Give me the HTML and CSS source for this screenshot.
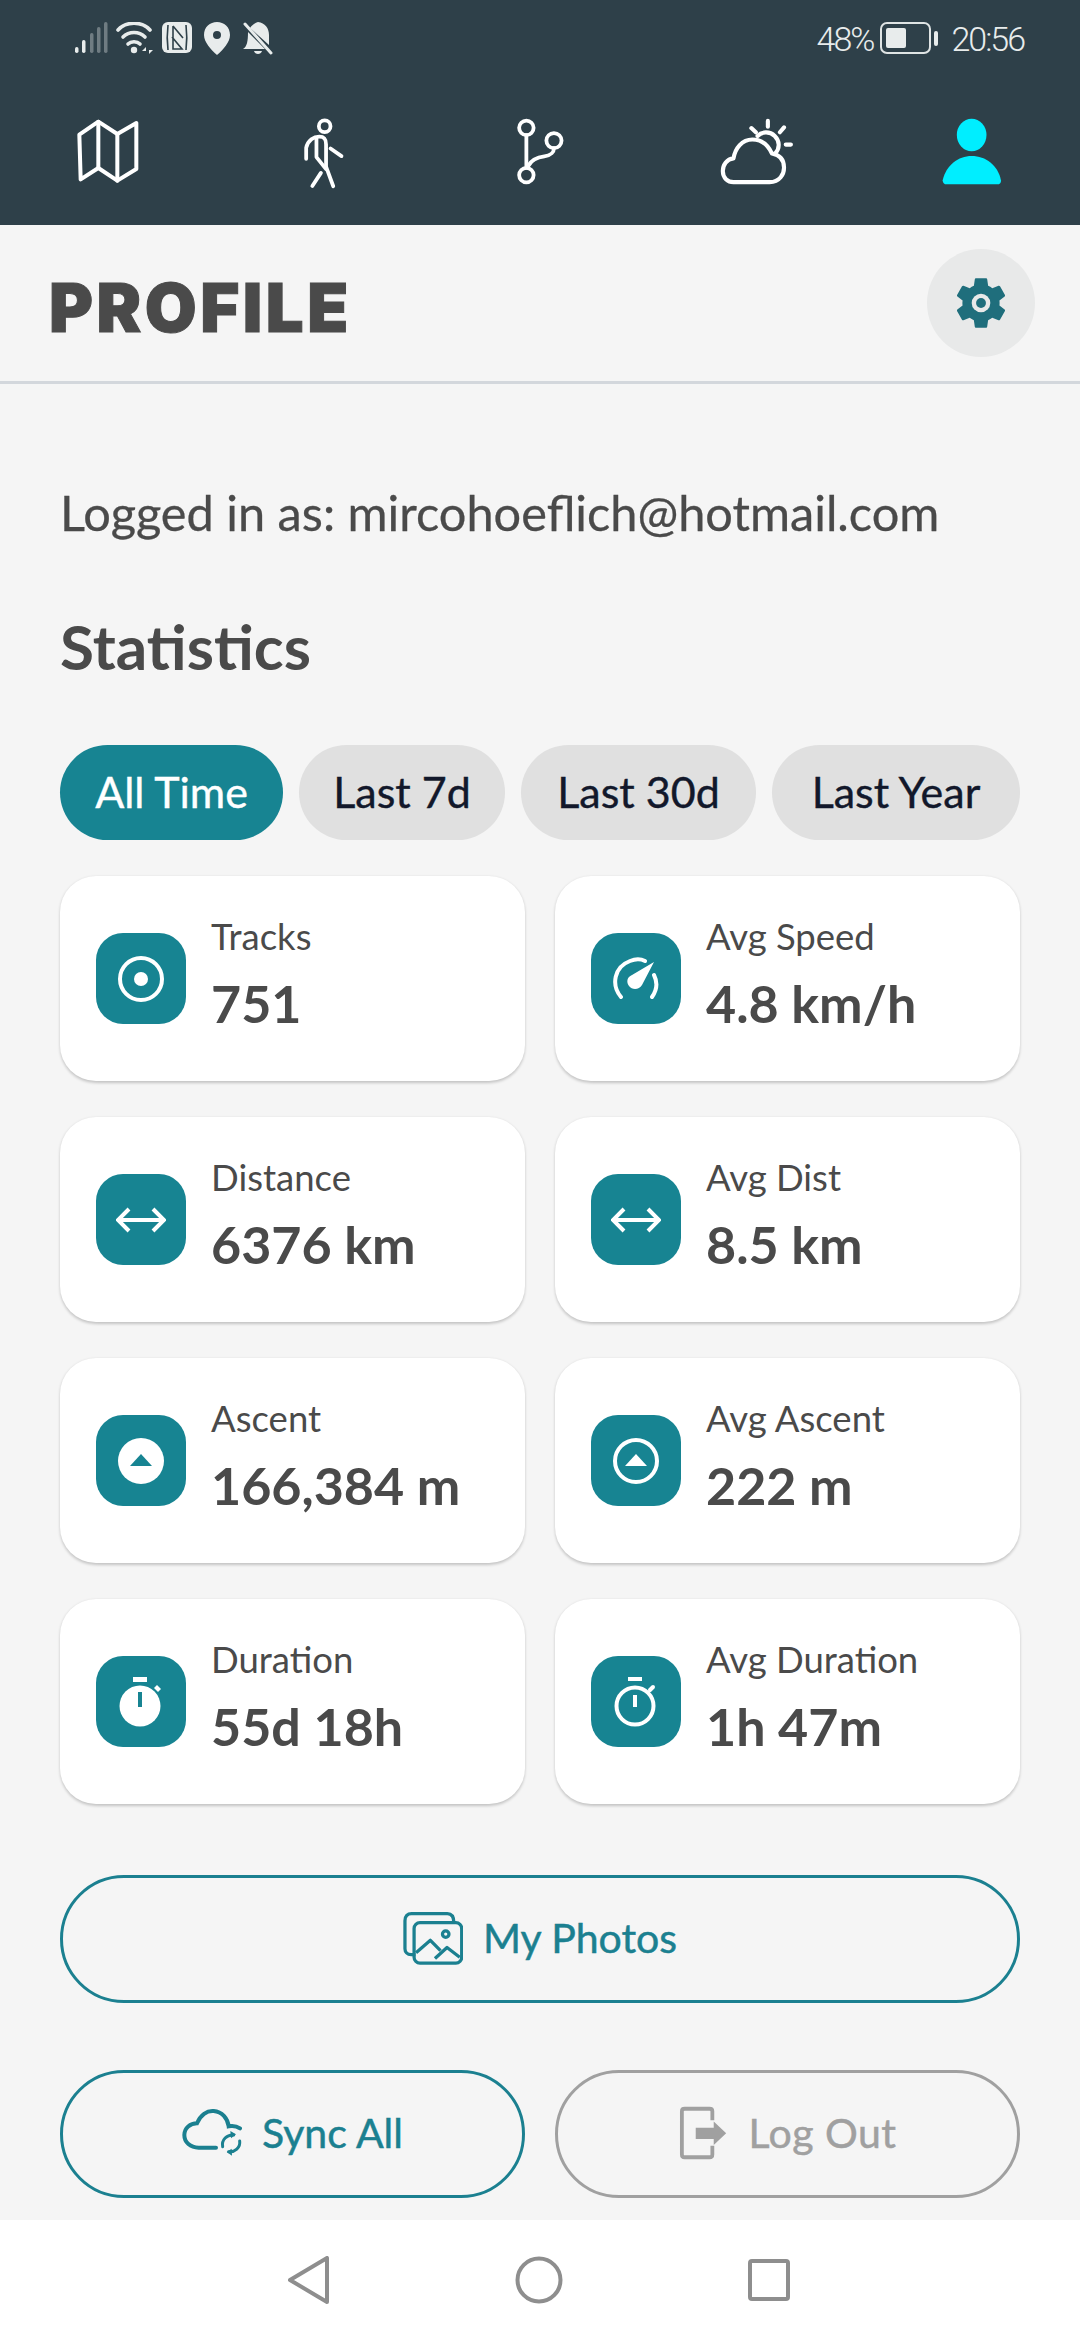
FILE: index.html
```html
<!DOCTYPE html>
<html>
<head>
<title>Profile</title>
<link rel="stylesheet" href="styles.css">
</head>
<body>

<div class="topbar">
  <div class="status">
    <div class="status-left">
      <svg width="36" height="32" viewBox="0 0 36 32" fill="#e8ecec">
        <rect x="1" y="25" width="3.5" height="6" rx="1.7"/>
        <rect x="8" y="18" width="3.5" height="13" rx="1.7"/>
        <g opacity=".35">
          <rect x="16" y="11" width="3.5" height="20" rx="1.7"/>
          <rect x="23" y="5" width="3.5" height="26" rx="1.7"/>
          <rect x="30" y="0" width="3.5" height="31" rx="1.7"/>
        </g>
      </svg>
      <svg class="gap-wifi" width="38" height="32" viewBox="0 0 38 32" fill="none" stroke="#e8ecec" stroke-width="3.6" stroke-linecap="round">
        <path d="M2 8C10 -1 26 -1 34 8"/>
        <path d="M7 15C13 9 23 9 29 15"/>
        <path d="M12 22C15 19 21 19 24 22"/>
        <circle cx="18" cy="28" r="3.2" fill="#e8ecec" stroke="none"/>
        <path d="M30 25l-4 4h4zM33 32l4-4h-4z" fill="#e8ecec" stroke="none"/>
      </svg>
      <svg class="gap-nfc" width="30" height="32" viewBox="0 0 30 32">
        <rect x="0" y="0" width="30" height="31" rx="6" fill="#e8ecec"/>
        <path d="M6 3C5 11 5 20 6 28M24 3C25 11 25 20 24 28M11 4L21 16M11 4V27H20L10 15" fill="none" stroke="#2e4049" stroke-width="1.6"/>
      </svg>
      <svg class="gap-pin" width="26" height="33" viewBox="0 0 26 33">
        <path fill-rule="evenodd" fill="#e8ecec" d="M13 0C20 0 26 5 26 13C26 20 19 28 13 33C7 28 0 20 0 13C0 5 6 0 13 0ZM13 9a4 4 0 1 0 0 8a4 4 0 0 0 0-8Z"/>
      </svg>
      <svg class="gap-bell" width="30" height="33" viewBox="0 0 30 33">
        <path fill="#e8ecec" d="M15 0C22 1 26 6 26 13V23L7 6C9 3 12 1 15 0ZM5 10L22 27H0C4 25 5 19 5 10ZM11 29H19C18 33 12 33 11 29Z"/>
        <path d="M2 2L28 31" stroke="#e8ecec" stroke-width="3" stroke-linecap="round"/>
      </svg>
    </div>
    <div class="status-right">
      <span class="status-text">48%</span>
      <svg class="battery" width="58" height="32" viewBox="0 0 58 32">
        <rect x="1" y="1" width="49" height="30" rx="6" fill="none" stroke="#dfe4e4" stroke-width="2"/>
        <rect x="6" y="6" width="20" height="20" rx="2" fill="#e8ecec"/>
        <rect x="54" y="9" width="4" height="15" rx="2" fill="#e8ecec"/>
      </svg>
      <span class="status-text">20:56</span>
    </div>
  </div>

  <nav class="tabs">
    <div class="tab">
      <svg width="66" height="70" viewBox="215 350 198 204" fill="none" stroke="#fff" stroke-width="12" stroke-linejoin="round" stroke-linecap="round">
        <path d="M228 400L285 361L342 398L399 365V503L342 538L285 500L232 534Z"/>
        <path d="M285 361V500M342 398V538"/>
      </svg>
    </div>
    <div class="tab">
      <svg width="44" height="72" viewBox="875 345 128 210" fill="none" stroke="#fff" stroke-width="11" stroke-linejoin="round" stroke-linecap="round">
        <circle cx="941" cy="372" r="17"/>
        <path d="M887 467V435C892 412 910 402 925 402C942 402 945 412 945 425V490L966 547"/>
        <path d="M917 408V462L945 497M958 437L990 459M930 508L905 546"/>
      </svg>
    </div>
    <div class="tab">
      <svg width="50" height="70" viewBox="1495 350 145 202" fill="none" stroke="#fff" stroke-width="11" stroke-linecap="round">
        <circle cx="1528" cy="381" r="21"/>
        <circle cx="1528" cy="518" r="21"/>
        <circle cx="1608" cy="418" r="22"/>
        <path d="M1528 402V497M1535 490C1545 470 1565 466 1580 464C1600 461 1608 450 1608 440"/>
      </svg>
    </div>
    <div class="tab">
      <svg width="76" height="70" viewBox="515 350 221 203" fill="none" stroke="#fff" stroke-width="12" stroke-linecap="round" stroke-linejoin="round">
        <path d="M560 539H665C695 539 707 515 707 497C707 475 695 460 672 456C660 430 640 415 615 415C585 415 565 440 560 470C540 472 529 490 529 507C529 527 543 539 560 539Z"/>
        <path d="M630 405C642 392 665 390 680 405C695 420 695 440 682 455"/>
        <path d="M660 361V378M612 382L625 394M707 380L695 394M712 430H727"/>
      </svg>
    </div>
    <div class="tab">
      <svg width="60" height="68" viewBox="1168 350 174 197" fill="#00eeff">
        <ellipse cx="1254" cy="402" rx="43" ry="47"/>
        <path d="M1170 533C1180 490 1215 463 1254 463C1295 463 1330 490 1339 533Q1340 545 1328 545H1182Q1170 545 1170 533Z"/>
      </svg>
    </div>
  </nav>
</div>

<header class="page-head">
  <h1>PROFILE</h1>
  <div class="gear-btn">
    <svg width="62" height="62" viewBox="0 0 24 24">
      <path fill="#1f6e7c" d="M19.14 12.94c.04-.3.06-.61.06-.94 0-.32-.02-.64-.07-.94l2.03-1.58c.18-.14.23-.41.12-.61l-1.92-3.32c-.12-.22-.37-.29-.59-.22l-2.39.96c-.5-.38-1.03-.7-1.62-.94l-.36-2.54c-.04-.24-.24-.41-.48-.41h-3.84c-.24 0-.43.17-.47.41l-.36 2.54c-.59.24-1.13.57-1.62.94l-2.39-.96c-.22-.08-.47 0-.59.22L2.74 8.87c-.12.21-.08.47.12.61l2.03 1.58c-.05.3-.09.63-.09.94s.02.64.07.94l-2.03 1.58c-.18.14-.23.41-.12.61l1.92 3.32c.12.22.37.29.59.22l2.39-.96c.5.38 1.03.7 1.62.94l.36 2.54c.05.24.24.41.48.41h3.84c.24 0 .44-.17.47-.41l.36-2.54c.59-.24 1.13-.56 1.62-.94l2.39.96c.22.08.47 0 .59-.22l1.92-3.32c.12-.22.07-.47-.12-.61l-2.01-1.58z"/>
      <circle cx="12" cy="12" r="3.6" fill="#e8e9e9"/>
      <circle cx="12" cy="12" r="1.9" fill="#1f6e7c"/>
    </svg>
  </div>
</header>

<main class="content">
  <p class="logged">Logged in as: mircohoeflich@hotmail.com</p>
  <h2>Statistics</h2>

  <div class="chips">
    <span class="chip active">All Time</span>
    <span class="chip">Last 7d</span>
    <span class="chip">Last 30d</span>
    <span class="chip">Last Year</span>
  </div>

  <div class="stats">
    <div class="card">
      <div class="tile">
        <svg width="48" height="48" viewBox="0 0 48 48" fill="none" stroke="#fff" stroke-width="4">
          <circle cx="24" cy="24" r="21"/>
          <circle cx="24" cy="24" r="7" fill="#fff" stroke="none"/>
        </svg>
      </div>
      <div class="txt"><div class="label">Tracks</div><div class="value">751</div></div>
    </div>
    <div class="card">
      <div class="tile">
        <svg width="48" height="44" viewBox="0 0 48 44" fill="none" stroke="#fff" stroke-width="4" stroke-linecap="round">
          <path d="M9 40C-1 28 2 10 18 4C23 2 29 2 33 4M42 18C46 26 45 33 40 40"/>
          <path d="M42 5L30 28C27 33 20 33 17 29C14 25 15 20 20 18Z" fill="#fff" stroke="none"/>
        </svg>
      </div>
      <div class="txt"><div class="label">Avg Speed</div><div class="value">4.8 km/h</div></div>
    </div>

    <div class="card">
      <div class="tile">
        <svg width="50" height="26" viewBox="0 0 50 26" fill="none" stroke="#fff" stroke-width="4">
          <path d="M2 13H48M13 2L2 13L13 24M37 2L48 13L37 24"/>
        </svg>
      </div>
      <div class="txt"><div class="label">Distance</div><div class="value">6376 km</div></div>
    </div>
    <div class="card">
      <div class="tile">
        <svg width="50" height="26" viewBox="0 0 50 26" fill="none" stroke="#fff" stroke-width="4">
          <path d="M2 13H48M13 2L2 13L13 24M37 2L48 13L37 24"/>
        </svg>
      </div>
      <div class="txt"><div class="label">Avg Dist</div><div class="value">8.5 km</div></div>
    </div>

    <div class="card">
      <div class="tile">
        <svg width="48" height="48" viewBox="0 0 48 48">
          <circle cx="24" cy="24" r="23" fill="#fff"/>
          <path d="M24 17L35 29H13Z" fill="#178492"/>
        </svg>
      </div>
      <div class="txt"><div class="label">Ascent</div><div class="value">166,384 m</div></div>
    </div>
    <div class="card">
      <div class="tile">
        <svg width="48" height="48" viewBox="0 0 48 48">
          <circle cx="24" cy="24" r="21" fill="none" stroke="#fff" stroke-width="4"/>
          <path d="M24 17L35 29H13Z" fill="#fff"/>
        </svg>
      </div>
      <div class="txt"><div class="label">Avg Ascent</div><div class="value">222 m</div></div>
    </div>

    <div class="card">
      <div class="tile">
        <svg width="44" height="50" viewBox="0 0 44 50" fill="#fff">
          <rect x="14" y="0" width="14" height="5"/>
          <circle cx="21" cy="29" r="20.5"/>
          <path d="M35 11l3-3 4 4-3 3z"/>
          <rect x="19" y="15" width="4" height="15" fill="#178492"/>
        </svg>
      </div>
      <div class="txt"><div class="label">Duration</div><div class="value">55d 18h</div></div>
    </div>
    <div class="card">
      <div class="tile">
        <svg width="44" height="50" viewBox="0 0 44 50" fill="none" stroke="#fff" stroke-width="4">
          <path d="M14 2H28" />
          <circle cx="21" cy="29" r="18.5"/>
          <path d="M36 13l3-3" stroke-linecap="round"/>
          <path d="M21 18V30"/>
        </svg>
      </div>
      <div class="txt"><div class="label">Avg Duration</div><div class="value">1h 47m</div></div>
    </div>
  </div>

  <button class="btn wide">
    <svg width="60" height="54" viewBox="190 158 184 162" fill="none" stroke="#1b8090" stroke-width="10" stroke-linejoin="round">
      <path d="M228 290H215C203 290 196 282 196 272V186C196 172 204 164 216 164H326C338 164 346 172 346 192"/>
      <rect x="224" y="192" width="146" height="124" rx="18"/>
      <circle cx="321" cy="227" r="10"/>
      <path d="M230 284L274 246L305 278M288 302L325 268L364 298"/>
    </svg>
    My Photos
  </button>

  <div class="btn-row">
    <button class="btn">
      <svg width="60" height="50" viewBox="360 160 180 148" fill="none" stroke="#1b8090" stroke-width="12" stroke-linecap="round">
        <path d="M462 278H410C385 278 367 262 367 240C367 218 385 205 405 205C415 180 435 166 455 168C480 170 497 190 500 214C512 212 525 214 534 220"/>
        <path d="M482 275C478 255 495 238 515 240M533 258C536 278 518 292 500 290" stroke-width="9"/>
        <path d="M505 228l17 10-15 12zM510 302l-16-11 15-10z" fill="#1b8090" stroke="none"/>
      </svg>
      Sync All
    </button>
    <button class="btn muted">
      <svg width="50" height="54" viewBox="420 145 142 156" fill="none" stroke="#a0a0a0" stroke-width="11" stroke-linejoin="round">
        <path d="M518 186V160Q518 153 510 153H438Q430 153 430 160V285Q430 293 438 293H510Q518 293 518 285V260"/>
        <path d="M470 208H522V190L558 224L522 258V240H470Z" fill="#a0a0a0" stroke="none"/>
      </svg>
      Log Out
    </button>
  </div>
</main>

<footer class="sysnav">
  <svg width="42" height="48" viewBox="0 0 42 48" fill="none" stroke="#8e8e8e" stroke-width="4" stroke-linejoin="round">
    <path d="M2 24L39 2V46Z"/>
  </svg>
  <svg width="48" height="48" viewBox="0 0 48 48" fill="none" stroke="#8e8e8e" stroke-width="4">
    <circle cx="24" cy="24" r="21.5"/>
  </svg>
  <svg width="42" height="42" viewBox="0 0 42 42" fill="none" stroke="#8e8e8e" stroke-width="4" stroke-linejoin="round">
    <rect x="2" y="2" width="38" height="38" rx="2"/>
  </svg>
</footer>

</body>
</html>
```

FILE: styles.css
```css
* {
  box-sizing: border-box;
}

body {
  margin: 0;
  width: 1080px;
  height: 2340px;
  overflow: hidden;
  background: #f5f5f5;
  color: #4a4a4a;
  font-family: "Lato", "Noto Sans", sans-serif;
  display: flex;
  flex-direction: column;
}

/* top bar */
.topbar {
  height: 225px;
  background: #2e4049;
  flex: none;
}

.status {
  height: 78px;
  padding: 22px 56px 0 74px;
  display: flex;
  justify-content: space-between;
  align-items: flex-start;
}

.status-left,
.status-right {
  display: flex;
  align-items: flex-start;
}

.gap-wifi { margin-left: 6px; }
.gap-nfc { margin-left: 8px; }
.gap-pin { margin-left: 12px; }
.gap-bell { margin-left: 13px; }

.status-text {
  font-family: "Roboto", sans-serif;
  font-size: 34px;
  font-weight: 300;
  line-height: 34px;
  letter-spacing: -2px;
  color: #e8ecec;
}

.battery { margin: 0 13px 0 7px; }

.tabs {
  display: grid;
  grid-template-columns: repeat(5, 216px);
  height: 147px;
}

.tab {
  display: flex;
  justify-content: center;
  align-items: flex-start;
  padding-top: 39px;
}

/* page header */
.page-head {
  height: 159px;
  flex: none;
  border-bottom: 3px solid #d3d7dc;
  padding: 24px 45px 0 49px;
  display: flex;
  justify-content: space-between;
  align-items: flex-start;
}

h1 {
  margin: 23px 0 0;
  font-family: "Inter", "Lato", sans-serif;
  font-size: 67px;
  line-height: 72px;
  font-weight: 900;
  letter-spacing: 3.5px;
  -webkit-text-stroke: 1px #4a4a4a;
}

.gear-btn {
  width: 108px;
  height: 108px;
  border-radius: 50%;
  background: #e8e9e9;
  display: flex;
  justify-content: center;
  align-items: center;
}

/* main */
.content {
  flex: 1;
  padding: 0 60px;
}

.logged {
  margin: 0;
  padding-top: 100px;
  font-size: 48.7px;
  line-height: 56px;
  -webkit-text-stroke: .3px #4a4a4a;
}

h2 {
  margin: 0;
  padding-top: 74px;
  font-size: 62px;
  line-height: 64px;
  font-weight: 700;
}

.chips {
  display: flex;
  gap: 16px;
  margin-top: 67px;
}

.chip {
  height: 95px;
  border-radius: 48px;
  background: #e0e0e0;
  color: #12182b;
  font-size: 43px;
  line-height: 93px;
  -webkit-text-stroke: .4px;
  display: flex;
  align-items: flex-start;
  justify-content: center;
  width: 206px;
}

.chip:nth-child(1) { width: 223px; background: #178492; color: #fff; }
.chip:nth-child(3) { width: 235px; }
.chip:nth-child(4) { width: 248px; }

.stats {
  display: grid;
  grid-template-columns: 465px 465px;
  grid-auto-rows: 205px;
  column-gap: 30px;
  row-gap: 36px;
  margin-top: 36px;
}

.card {
  background: #fff;
  border-radius: 36px;
  box-shadow: 0 1.5px 3px rgba(0, 0, 0, .2);
  padding-left: 36px;
  display: flex;
  align-items: center;
  gap: 25px;
}

.tile {
  width: 90px;
  height: 91px;
  border-radius: 27px;
  background: #178492;
  display: flex;
  align-items: center;
  justify-content: center;
  flex: none;
}

.txt {
  padding-bottom: 11px;
}

.label {
  font-size: 36.5px;
  line-height: 46px;
}

.value {
  margin-top: 14px;
  font-size: 52px;
  line-height: 60px;
  font-weight: 700;
}

.btn {
  font-family: inherit;
  font-size: 41px;
  line-height: 48px;
  -webkit-text-stroke: .5px;
  color: #1b8090;
  background: transparent;
  border: 3px solid #1b8090;
  border-radius: 64px;
  height: 128px;
  width: 465px;
  display: flex;
  align-items: center;
  justify-content: center;
  gap: 20px;
  padding: 0 0 2px;
}

.btn.wide {
  width: 960px;
  margin-top: 71px;
}

.btn-row {
  display: flex;
  gap: 30px;
  margin-top: 67px;
}

.btn.muted {
  color: #a0a0a0;
  border-color: #a0a0a0;
  letter-spacing: .5px;
}

/* android buttons */
.sysnav {
  height: 120px;
  flex: none;
  background: #fff;
  display: flex;
  align-items: center;
  padding-left: 288px;
  gap: 185px;
}
```
